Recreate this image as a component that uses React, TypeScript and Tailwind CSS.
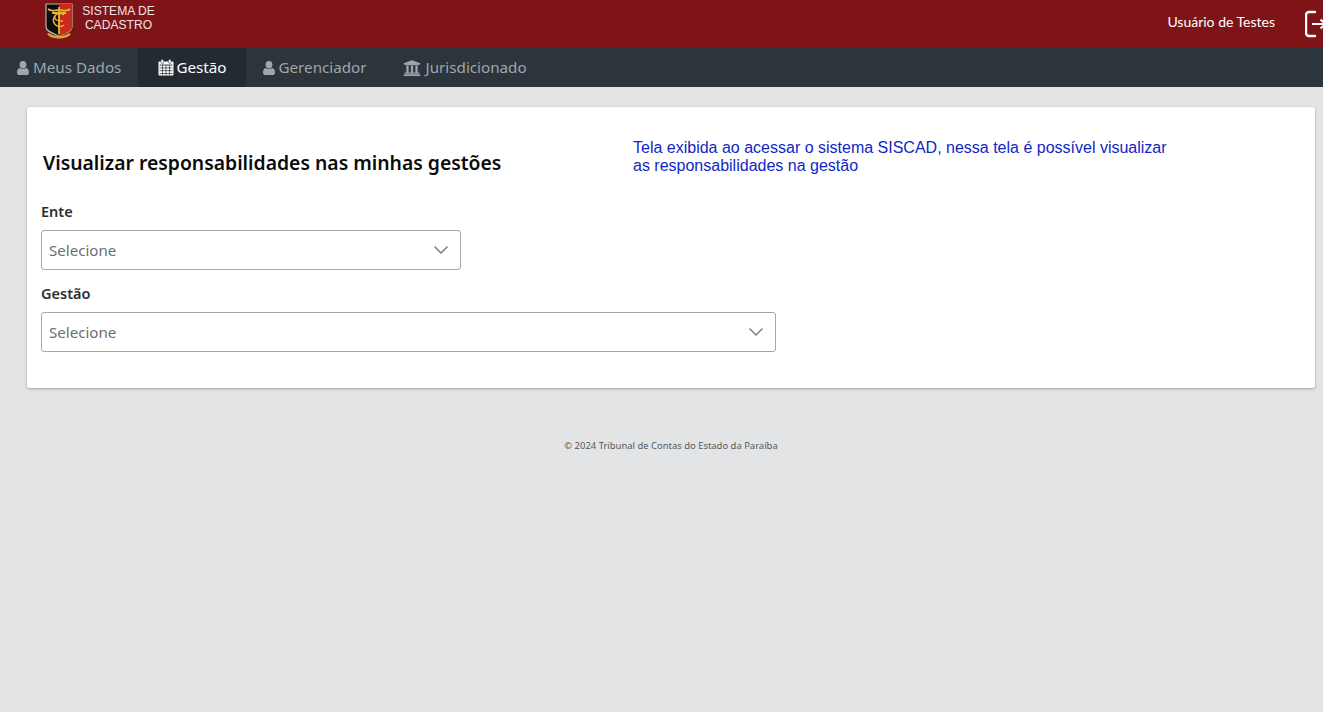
import React from "react";
import { FaUniversity } from "react-icons/fa";

function UserIcon() {
  return (
    <svg width="12" height="14" viewBox="0 0 12 14" className="shrink-0" fill="currentColor">
      <ellipse cx="6" cy="3.700" rx="3.400" ry="3.700" />
      <path d="M0 11.400C0 8.900 1 7.200 2.800 6.900 3.600 7.600 4.700 8 6 8s2.400-.4 3.200-1.100C11 7.200 12 8.900 12 11.400 12 13 11 14 9.700 14H2.300C1 14 0 13 0 11.400z" />
    </svg>
  );
}

function Calendar() {
  return (
    <svg width="16" height="17" viewBox="0 0 16 17" className="shrink-0">
      <rect x="0.5" y="2.500" width="15" height="14" rx="1" fill="#fff" />
      <rect x="3" y="0.500" width="2.400" height="4" rx="0.800" fill="#fff" stroke="#232a31" strokeWidth="0.500" />
      <rect x="10.600" y="0.500" width="2.400" height="4" rx="0.800" fill="#fff" stroke="#232a31" strokeWidth="0.500" />
      <g fill="#232a31">
        <rect x="1.500" y="5.600" width="13" height="0.900" />
        <rect x="1.500" y="8.600" width="13" height="0.700" />
        <rect x="1.500" y="11.400" width="13" height="0.700" />
        <rect x="1.500" y="14" width="13" height="0.700" />
        <rect x="4.200" y="6" width="0.700" height="10" />
        <rect x="7.600" y="6" width="0.700" height="10" />
        <rect x="11" y="6" width="0.700" height="10" />
      </g>
    </svg>
  );
}

function Logo() {
  return (
    <svg width="30" height="40" viewBox="0 0 30 40" className="shrink-0">
      <path d="M2 2h26v23c0 4-6 6-13 9C8 31 2 29 2 25z" fill="#0d0b0b" stroke="#b9b2a8" strokeWidth="1.200" />
      <path d="M15 2h13v23c0 4-6 6-13 9z" fill="#c92a1c" />
      <path d="M4 7c3 3 7 1 11 1s8 2 11-1" stroke="#e2b53e" strokeWidth="1.800" fill="none" />
      <path d="M8 11h14M15 5v27" stroke="#e2b53e" strokeWidth="1.800" fill="none" />
      <path d="M20 13a6.500 6.500 0 1 0 0 10" stroke="#e2b53e" strokeWidth="1.500" fill="none" />
      <path d="M11 14c-1 4 2 5 8 5" stroke="#e2b53e" strokeWidth="1.300" fill="none" />
      <path d="M3 32c4 6 20 6 24 0l-2-1c-4 4-16 4-20 0z" fill="#d7a92f" />
    </svg>
  );
}

function NavItem({ icon, label, active, className }: { icon: React.ReactNode; label: string; active?: boolean; className: string }) {
  return (
    <div className={`flex items-center h-full text-[15.2px] ${className} ${active ? "bg-[#232a31] text-white" : "text-[#a0a6ab]"}`}>
      {icon}
      <span>{label}</span>
    </div>
  );
}

function Chevron() {
  return (
    <svg width="16" height="16" viewBox="0 0 16 16" fill="none" className="shrink-0">
      <path d="M2 5l6 6 6-6" stroke="#858585" strokeWidth="1.700" strokeLinecap="round" strokeLinejoin="round" />
    </svg>
  );
}

function Select({ width, label }: { width: string; label: string }) {
  return (
    <div>
      <div className="text-[14.5px] font-semibold leading-[20px] text-[#2b2f33] mb-[9px]">{label}</div>
      <div className={`${width} h-[40px] border border-[#a6a6a6] rounded-[3px] bg-white flex items-center justify-between pl-[7px] pr-[11px] text-[15.1px] text-[#6a6f73]`}>
        <span>Selecione</span>
        <Chevron />
      </div>
    </div>
  );
}

export default function App() {
  return (
    <div className="min-h-[712px] bg-[#e3e4e6] font-['Noto_Sans',sans-serif] overflow-hidden">
      <header className="h-[48px] bg-[#7e1418] flex items-center">
        <div className="flex items-start h-full pl-[44px] pt-[2px] gap-[7px]">
          <Logo />
          <div className="w-[75px] mt-[3px] font-['Liberation_Sans',sans-serif] text-[12.1px] leading-[13.500px] text-[#f0e3e3] text-center">
            SISTEMA DE CADASTRO
          </div>
        </div>
        <div className="ml-auto flex items-center text-white">
          <span className="font-['Lato',sans-serif] text-[14px] -translate-y-[3px]">Usuário de Testes</span>
          <svg width="18" height="28" viewBox="0 0 18 28" fill="none" className="ml-[30px] shrink-0">
            <path d="M10 2H4A3 3 0 0 0 1 5v18a3 3 0 0 0 3 3h6" stroke="#fff" strokeWidth="2.400" strokeLinecap="round" />
            <path d="M7 14h11M15.500 9.500L18 12M15.500 18.500L18 16" stroke="#fff" strokeWidth="2" />
          </svg>
        </div>
      </header>
      <nav className="h-[39px] bg-[#2c343c] flex items-center">
        <NavItem className="pl-[17px] pr-[17px] gap-[4px]" icon={<UserIcon />} label="Meus Dados" />
        <NavItem className="pl-[20px] pr-[20px] gap-[2px]" active icon={<Calendar />} label="Gestão" />
        <NavItem className="pl-[17px] pr-[17px] gap-[3px]" icon={<UserIcon />} label="Gerenciador" />
        <NavItem className="pl-[19px] pr-[17px] gap-[5px]" icon={<FaUniversity size={18} className="shrink-0" />} label="Jurisdicionado" />
      </nav>
      <main className="ml-[27px] mr-[8px] mt-[20px] h-[281px] bg-white rounded-[3px] shadow-[0_1px_3px_rgba(0,0,0,0.3)] pl-[14px] pt-[30px]">
        <div className="flex items-start">
          <h1 className="w-[592px] pl-[2px] pt-[11px] text-[19.35px] leading-[30px] font-semibold text-[#0b0b0b]">
            Visualizar responsabilidades nas minhas gestões
          </h1>
          <p className="w-[540px] mt-[2px] font-['Liberation_Sans',sans-serif] text-[16px] leading-[18px] text-[#0f28c4]">
            Tela exibida ao acessar o sistema SISCAD, nessa tela é possível visualizar as responsabilidades na gestão
          </p>
        </div>
        <div className="mt-[23px] flex flex-col gap-[13px]">
          <Select width="w-[420px]" label="Ente" />
          <Select width="w-[735px]" label="Gestão" />
        </div>
      </main>
      <footer className="mt-[51px] text-center text-[9.450px] text-[#55595d] leading-[14px] pl-[19px]">
        © 2024 Tribunal de Contas do Estado da Paraíba
      </footer>
    </div>
  );
}
